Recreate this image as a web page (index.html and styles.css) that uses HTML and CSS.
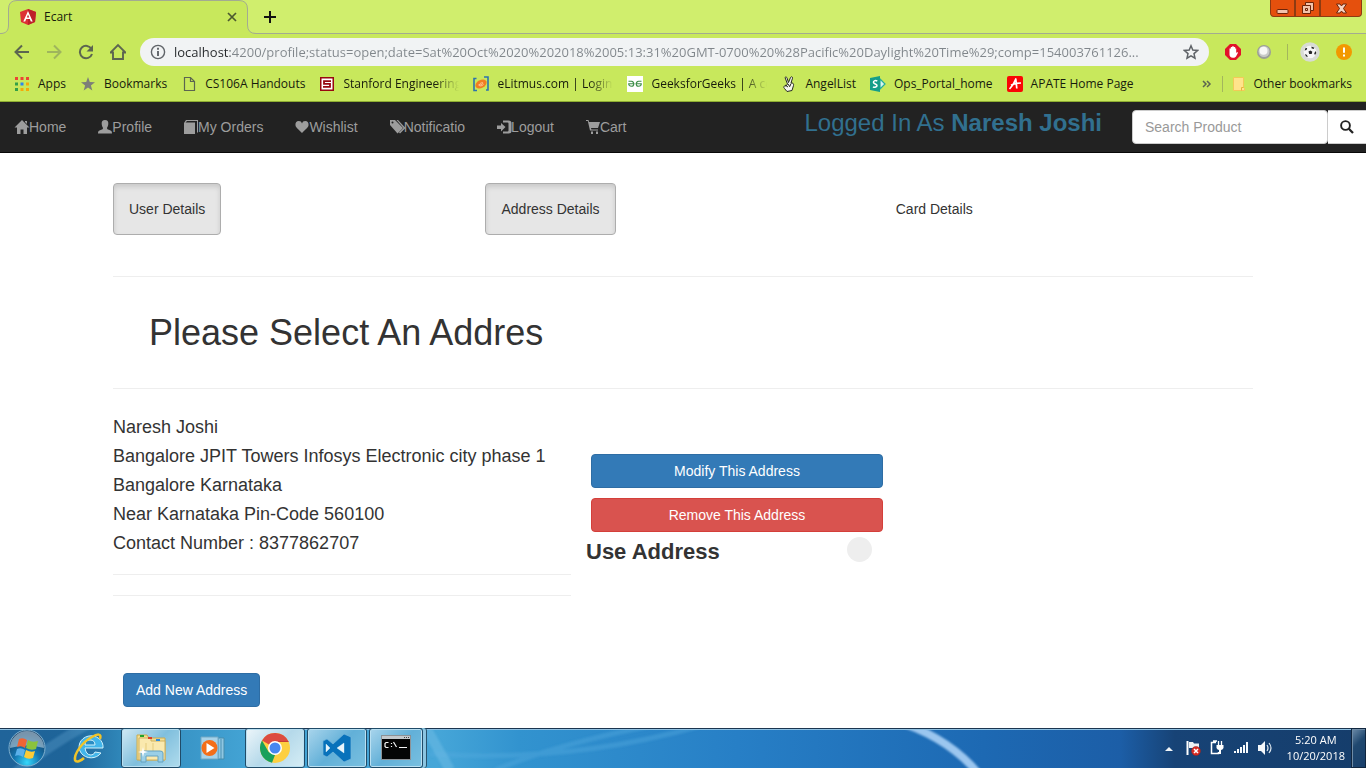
FILE: index.html
```html
<!DOCTYPE html>
<html lang="en">
<head>
<meta charset="utf-8">
<title>Ecart</title>
<link rel="stylesheet" href="styles.css">
</head>
<body>
<header class="browser">
  <div class="tab-strip">
    <div class="tab">
      <svg class="tab-shape" width="256" height="34" viewBox="0 0 256 34"><path d="M0 33.5C6 33.5 8.500 31 8.500 25V9Q8.500 .5 17 .5H239Q247.500 .5 247.500 9V25Q247.500 33.500 256 33.500V35H0Z" fill="#c8e85c"/><path d="M0 33.500C6 33.500 8.500 31 8.500 25V9Q8.500 .5 17 .5H239Q247.500 .5 247.500 9V25Q247.500 33.500 256 33.500" fill="none" stroke="#a3ab91"/></svg>
      <svg width="16" height="16" viewBox="0 0 16 16"><path d="M8 0l8 3-1 10-7 3-7-3L0 3z" fill="#dd3035"/><path d="M8 0l8 3-1 10-7 3z" fill="#bd2029"/><path d="M8 2L3.300 12.500h1.900l1-2.400h3.600l1 2.400h1.900zM8 5.600L9.200 8.500H6.800z" fill="#fff" fill-rule="evenodd"/></svg>
      <span class="tab-title">Ecart</span>
      <button class="bare" aria-label="Close tab"><svg width="10" height="10" viewBox="0 0 10 10"><path d="M1 1l8 8M9 1L1 9" stroke="#4c5930" stroke-width="1.700"/></svg></button>
    </div>
    <button class="bare new-tab" aria-label="New tab"><svg width="12" height="12" viewBox="0 0 12 12"><path d="M6 0v12M0 6h12" stroke="#111" stroke-width="2"/></svg></button>
    <div class="window-controls">
      <button class="minimise" aria-label="Minimize"><svg width="13" height="13" viewBox="0 0 13 13"><rect x="1" y="7.500" width="11" height="4" rx="1" fill="#f3c3ab" stroke="#6e2409"/></svg></button>
      <button class="restore" aria-label="Restore"><svg width="14" height="14" viewBox="0 0 14 14"><path d="M4.500 1.500h8v8h-3v3h-8v-8h3z" fill="#f3c3ab" stroke="#6e2409"/><path d="M4.500 4.500h5v5M4.500 7.500h2v2h-2z" fill="none" stroke="#6e2409"/></svg></button>
      <button class="close" aria-label="Close"><svg width="13" height="13" viewBox="0 0 13 13"><path d="M1.500 2h3.500l1.500 2L8 2h3.500L8.500 6.500l3 4.500H8L6.500 9 5 11H1.500l3-4.500z" fill="#f6d3c2" stroke="#6e2409"/></svg></button>
    </div>
  </div>

  <div class="toolbar">
    <div class="nav-buttons">
      <button class="bare" aria-label="Back"><svg width="16" height="16" viewBox="0 0 16 16"><path d="M15 8H2M8 1.500L1.500 8 8 14.500" fill="none" stroke="#5c6550" stroke-width="2"/></svg></button>
      <button class="bare" aria-label="Forward"><svg width="16" height="16" viewBox="0 0 16 16"><path d="M1 8h13M8 1.500L14.500 8 8 14.500" fill="none" stroke="#9fb55d" stroke-width="2"/></svg></button>
      <button class="bare" aria-label="Reload"><svg width="16" height="16" viewBox="0 0 16 16"><path d="M13.500 5A6.200 6.200 0 1 0 14 10" fill="none" stroke="#5c6550" stroke-width="2"/><path d="M15 1v6.500H8.500z" fill="#5c6550"/></svg></button>
      <button class="bare" aria-label="Home"><svg width="16" height="18" viewBox="1 0 16 18"><path d="M1.500 9.500L9 2l7.500 7.500H14V16H4V9.500z" fill="none" stroke="#5c6550" stroke-width="1.900"/></svg></button>
    </div>
    <div class="omnibox">
      <svg width="16" height="16" viewBox="0 0 16 16"><circle cx="8" cy="8" r="6.600" fill="none" stroke="#5f6368" stroke-width="1.400"/><path d="M8 3.800v1.900M8 7v5" stroke="#5f6368" stroke-width="1.900"/></svg>
      <input class="url" type="text" aria-label="Address" value="localhost:4200/profile;status=open;date=Sat%20Oct%2020%202018%2005:13:31%20GMT-0700%20%28Pacific%20Daylight%20Time%29;comp=154003761126...">
      <button class="bare" aria-label="Bookmark this page"><svg width="16" height="16" viewBox="0 0 16 16"><path d="M8 1.800l1.800 4.300 4.700.4-3.500 3.100 1 4.600L8 11.800l-4 2.400 1-4.600-3.500-3.100 4.700-.4z" fill="none" stroke="#5f6368" stroke-width="1.500"/></svg></button>
    </div>
    <div class="extensions">
      <button class="bare" aria-label="Ad blocker"><svg width="16" height="16" viewBox="0 0 16 16"><path d="M5 0h6l5 5v6l-5 5H5l-5-5V5z" fill="#e2122a"/><path d="M4.500 8V4.500h1.300V3h1.400V2.300h1.500V3h1.500v1.500h1V9l1-1 .8.800-2 3.700c-.6.900-1.500 1.200-3 1.200-2.500 0-3.500-1.500-3.500-3.200z" fill="#fff"/></svg></button>
      <button class="bare" aria-label="Extension"><svg width="14" height="14" viewBox="0 0 14 14"><circle cx="7" cy="7" r="7" fill="#9b9e98"/><circle cx="7" cy="6.500" r="5.500" fill="#c8cac9"/><circle cx="6.500" cy="5.800" r="4" fill="#f7f7f7"/></svg></button>
      <span class="divider"></span>
      <button class="bare" aria-label="Profile"><svg width="20" height="20" viewBox="0 0 20 20"><circle cx="10" cy="10" r="9.800" fill="#d8dbd5"/><circle cx="10" cy="10" r="6.300" fill="#f6f6f6"/><path d="M8.500 9.500l2-1 1.800 1.300-.6 2.200H9.200zM4.500 8.500l1.200-2.700 1.500.4L6.500 8zM11.500 4.500l3 1.200-1 1.300-2-.7zM15.500 9l.8 2-1.300 2-.8-1.500zM5 12l2 1 .8 2.200-2-1z" fill="#252525"/></svg></button>
      <button class="bare" aria-label="Menu, update available"><svg width="16" height="16" viewBox="0 0 16 16"><circle cx="8" cy="8" r="8" fill="#f29900"/><path d="M8 3.500v5.300M8 10.500v2" stroke="#fff" stroke-width="2"/></svg></button>
    </div>
  </div>

  <nav class="bookmarks" aria-label="Bookmarks">
    <a class="bookmark" href="#"><svg width="16" height="16" viewBox="0 0 16 16"><path d="M1 1h3v3H1zM6.500 1h3v3h-3zM12 1h3v3h-3z" fill="#ea4335"/><path d="M1 6.500h3v3H1zM1 12h3v3H1z" fill="#34a046"/><path d="M6.500 6.500h3v3h-3z" fill="#2b87f0"/><path d="M12 6.500h3v3h-3zM6.500 12h3v3h-3zM12 12h3v3h-3z" fill="#f6a908"/></svg><span>Apps</span></a>
    <a class="bookmark" href="#"><svg width="16" height="16" viewBox="0 0 16 16"><path d="M8 1l1.800 5 5.200.2-4.100 3.300 1.400 5L8 11.600l-4.300 2.900 1.400-5L1 6.200 6.200 6z" fill="#7c7f78"/></svg><span>Bookmarks</span></a>
    <a class="bookmark" href="#"><svg width="16" height="16" viewBox="0 0 16 16"><path d="M3.500 1.500h6l4 4v9h-10zM9.500 1.500v4h4" fill="none" stroke="#5c6550" stroke-width="1.200"/></svg><span>CS106A Handouts</span></a>
    <a class="bookmark" href="#"><svg width="16" height="16" viewBox="0 0 16 16"><path d="M1 1h14v14H1z" fill="#98080f"/><path d="M2.500 2.500h11v11h-11z" fill="#fff"/><path d="M12 5.200H5v2.600h6v3H4" fill="none" stroke="#98080f" stroke-width="1.800"/></svg><span class="clipped">Stanford Engineering</span></a>
    <a class="bookmark" href="#"><svg width="16" height="16" viewBox="0 0 16 16"><path d="M3.500 2.500H1v12h3M11 1h4v13h-2" fill="none" stroke="#2c73ad" stroke-width="1.600"/><ellipse cx="8" cy="8" rx="6" ry="4" fill="#f27c21" transform="rotate(-28 8 8)"/><path d="M5.500 9c3 0 4.500-1.200 4.500-2s-3.500 0-3.800 2c-.2 1.200 2.300 1.500 4.300-.5" fill="none" stroke="#ffd0a7" stroke-width=".8"/></svg><span class="clipped">eLitmus.com | Login P</span></a>
    <a class="bookmark" href="#"><svg width="16" height="16" viewBox="0 0 16 16"><path d="M0 0h16v16H0z" fill="#fff"/><path d="M1.500 5.200h3c3 .5 3 5 0 5-2 0-2.800-1.300-2.800-2.500H7.500M14.500 5.200h-3c-3 .5-3 5 0 5 2 0 2.800-1.300 2.800-2.500H8.500" fill="none" stroke="#3f8f49" stroke-width="1.100"/></svg><span class="clipped">GeeksforGeeks | A co</span></a>
    <a class="bookmark" href="#"><svg width="16" height="16" viewBox="0 0 16 16"><path d="M4 1.500c1-1 1.800-.3 2.100.7L7.500 6.500l2-5c.8-1.400 2.400-.6 2 .7L10 7c1.800-.3 3 .7 2.500 2.500l-1.500 5-5 1-2.500-3C2 11 3 9.500 5 10L6.500 8z" fill="#f5f5ed" stroke="#272b20"/><path d="M4 9l3 2M7 8l2 3M10 7.500l-1 2.500" stroke="#272b20"/></svg><span>AngelList</span></a>
    <a class="bookmark" href="#"><svg width="16" height="16" viewBox="0 0 16 16"><path d="M10 3l5 5-5 5z" fill="#d8f4ef" stroke="#25ae9a" stroke-width="1.200"/><path d="M0 2l10-2v16L0 14z" fill="#159e8a"/><path d="M7.300 5C5 4 3.200 5 3.500 6.500S7 8 7 9.500 4.500 11.800 3 10.800" fill="none" stroke="#fff" stroke-width="1.500"/></svg><span>Ops_Portal_home</span></a>
    <a class="bookmark" href="#"><svg width="16" height="16" viewBox="0 0 16 16"><rect width="16" height="16" rx="2" fill="#fb0505"/><path d="M2.500 13C5 10.500 7.500 6.500 8.800 3l1 9.500M4 9.200q4-2.200 10-2.200" fill="none" stroke="#fff" stroke-width="1.700" stroke-linejoin="round"/></svg><span>APATE Home Page</span></a>
    <div class="bookmarks-end">
      <button class="bare" aria-label="More bookmarks"><svg width="10" height="8" viewBox="0 0 10 8"><path d="M1 1l3 3-3 3M5 1l3 3-3 3" fill="none" stroke="#5c6550" stroke-width="1.500"/></svg></button>
      <span class="divider"></span>
      <a class="bookmark" href="#"><svg width="12" height="16" viewBox="2 0 12 16"><path d="M2.500 1.500h10v9.500l1 1.500v2h-11z" fill="#ffe38b" stroke="#f2ca57"/><path d="M10.500 14.500v-3h2" fill="none" stroke="#e6b23c"/></svg><span>Other bookmarks</span></a>
    </div>
  </nav>
</header>

<div class="navbar">
  <nav class="menu" aria-label="Main">
    <a href="#"><svg viewBox="0 0 14 14"><path d="M7 0l7.500 7.500H12V14H8.500V9.500h-3V14H2V7.500H-.5L7 0zM10 1h2v3l-2-2z"/></svg>Home</a>
    <a href="#"><svg viewBox="0 0 14 14"><path d="M7 0c2.500 0 3.500 1.500 3.300 4C10.200 6 9.300 7 9 8c0 1.500 1.500 1.500 3 2.200 1.500.6 2 1.300 2 3.300H0c0-2 .5-2.700 2-3.300C3.500 9.500 5 9.500 5 8c-.3-1-1.200-2-1.300-4C3.500 1.500 4.500 0 7 0z"/></svg>Profile</a>
    <a href="#"><svg viewBox="0 0 14 14"><path d="M0 3l2-3h12v12l-1 1V1H3L1.500 2.500H11V14H0z"/></svg>My Orders</a>
    <a href="#"><svg viewBox="0 0 14 14"><path d="M7 3.500C7.500 1.800 8.500 1 10.200 1 12.500 1 14 3 13.500 5.500 13 8 9.500 10 7 13 4.500 10 1 8 .5 5.500 0 3 1.500 1 3.800 1 5.500 1 6.500 1.800 7 3.500z"/></svg>Wishlist</a>
    <a href="#"><svg viewBox="0 0 14 14"><path d="M0 0h5l8 8-5.500 5.500L0 5zM2.500 1.500a1 1 0 1 0 0 2 1 1 0 0 0 0-2zM6.500 0H8l7.500 8-5.500 5.500L9 12.500 13.500 8z" fill-rule="evenodd"/></svg>Notificatio</a>
    <a href="#"><svg viewBox="0 0 14 14"><path d="M0 5.500h4V3l4.500 4L4 11.500V9H0zM6 .5h5.500Q14.500 .5 14.500 3v8q0 2.500-3 2.500H6v-2h4.500q1 0 1-1V3.500q0-1-1-1H6z"/></svg>Logout</a>
    <a href="#"><svg viewBox="0 0 14 14"><path d="M0 0h2.500L3 2h11l-2 6H5l.4 1.500H12v1H4L1.800 1H0zM5 11.500h2V14H5zM10 11.500h2V14h-2z"/></svg>Cart</a>
  </nav>
  <h3 class="logged-in">Logged In As <b>Naresh Joshi</b></h3>
  <form class="search">
    <input type="text" placeholder="Search Product" aria-label="Search Product">
    <button type="button" aria-label="Search"><svg width="14" height="14" viewBox="0 0 14 14"><circle cx="5.500" cy="5.500" r="4.400" fill="none" stroke="#222" stroke-width="1.900"/><path d="M8.800 8.800l4.200 4.200" stroke="#222" stroke-width="2.300"/></svg></button>
  </form>
</div>

<main class="page">
  <div class="container">
    <ul class="sections">
      <li><button class="section-button active">User Details</button></li>
      <li><button class="section-button active">Address Details</button></li>
      <li><button class="section-button">Card Details</button></li>
    </ul>
    <hr>
    <h1>Please Select An Addres</h1>
    <hr>
    <div class="address-row">
      <section class="address">
        <p>Naresh Joshi<br>Bangalore JPIT Towers Infosys Electronic city phase 1<br>Bangalore Karnataka<br>Near Karnataka Pin-Code 560100<br>Contact Number : 8377862707</p>
        <hr>
        <hr>
      </section>
      <section class="address-actions">
        <button class="btn primary">Modify This Address</button>
        <button class="btn danger">Remove This Address</button>
        <label class="use-address" for="use-address">Use Address <input type="radio" id="use-address" name="address"></label>
      </section>
    </div>
    <button class="btn primary add-address">Add New Address</button>
  </div>
</main>

<footer class="taskbar">
  <svg class="glow" viewBox="0 0 1366 40" preserveAspectRatio="none">
    <defs>
      <linearGradient id="bar"><stop offset="0" stop-color="#20649a"/><stop offset=".05" stop-color="#1e6499"/><stop offset=".09" stop-color="#3088ba"/><stop offset=".18" stop-color="#43a3d4"/><stop offset=".32" stop-color="#46a6d8"/><stop offset=".38" stop-color="#3293cf"/><stop offset=".54" stop-color="#277fc6"/><stop offset=".72" stop-color="#1d69b3"/><stop offset=".82" stop-color="#1c5ea7"/><stop offset=".86" stop-color="#174376"/><stop offset="1" stop-color="#153d6b"/></linearGradient>
      <filter id="soft" x="-20%" y="-20%" width="140%" height="140%"><feGaussianBlur stdDeviation="1.300"/></filter>
    </defs>
    <path d="M0 0h1366v40H0z" fill="url(#bar)"/>
    <g fill="none" filter="url(#soft)"><path d="M905-4Q950 12 978 45" stroke="#9bc6ef" stroke-width="8"/><path d="M495 42Q560 15 655-3M430 26Q570 35 700-2" stroke="#55a9df" stroke-width="5" opacity=".4"/><path d="M15 45Q45 20 90-5" stroke="#6db1dc" stroke-width="10" opacity=".3"/><path d="M425-2L450 42" stroke="#7bc4e9" stroke-width="10" opacity=".4"/></g>
    <path d="M0 .5h1366" stroke="#1b3550"/><path d="M0 1.500h1366" stroke="#8fc1e2"/>
  </svg>
  <button class="bare start" aria-label="Start"><svg width="40" height="40" viewBox="0 0 40 40"><defs><radialGradient id="orb" cx=".5" cy=".9" r=".8"><stop offset="0" stop-color="#35d8fb"/><stop offset=".45" stop-color="#1477b1"/><stop offset="1" stop-color="#173f66"/></radialGradient></defs><circle cx="20" cy="20" r="18" fill="url(#orb)" stroke="#81b2d0"/><path d="M3 20a17 17 0 0 1 34 0q-17-5-34 0z" fill="#d8eaf2" opacity=".5"/><path d="M12 11q4-2 8 1l-2 8q-4-3-8-1z" fill="#ef6535"/><path d="M21 12q4 3 10 1l-2 8q-5 2-10-1z" fill="#8bc33d"/><path d="M10 21q4-2 8 1l-2 7q-4-3-8-1z" fill="#5bb0ea"/><path d="M19 22q5 3 9 1l-2 7q-5 2-9-1z" fill="#fccb36"/></svg></button>
  <button class="task plain ie" aria-label="Internet Explorer"><svg width="34" height="34" viewBox="0 0 34 34"><path d="M29 22a12 11 0 1 1 2-5H13q1 7 6 7 3 0 4-3z" fill="#42b5ea" stroke="#d1f2fb"/><path d="M13 14h10q0-5-5-5t-5 5z" fill="#2b8dc4" stroke="#d1f2fb"/><path d="M28 8c2-6-3-5-8-2C10 11 2 23 3 29c1 3 6 1 9-2" fill="none" stroke="#f1c429" stroke-width="2.500"/></svg></button>
  <button class="task lit" aria-label="Windows Explorer"><svg width="34" height="30" viewBox="0 0 34 30"><path d="M3 2h10l2 3h16v22H3z" fill="#f4de91" stroke="#c9aa51"/><path d="M5 5h12v3h14v19H5z" fill="#fae9ae" stroke="#cfb15f"/><path d="M6 2h4v2H6z" fill="#23a329"/><path d="M14 4h4v2h-4z" fill="#dc3f29"/><path d="M22 6h4v2h-4z" fill="#2c8cdf"/><path d="M12 10v10M19 10v10" stroke="#e5cb7d"/><path d="M7 29V20q0-2 2-2h17q3 0 3 2v9h-5v-6H12v6z" fill="#9acfe7" stroke="#64a2c1"/><path d="M9 14l1 4 4 1-4 1-1 4-1-4-4-1 4-1z" fill="#fff"/></svg></button>
  <button class="task plain player" aria-label="Media Player"><svg width="28" height="26" viewBox="0 0 28 26"><path d="M3 3h22v21H5z" fill="#8fc7e2" stroke="#478dad"/><path d="M19 3v21M22 4v20" stroke="#4b91b4"/><path d="M2 2h17v22H2z" fill="#a7d2e8" stroke="#72a9c5"/><circle cx="10.500" cy="13" r="8" fill="#f46e18"/><path d="M7.500 8l8 5-8 5z" fill="#fff"/></svg></button>
  <button class="task current" aria-label="Google Chrome"><svg width="30" height="30" viewBox="0 0 30 30"><circle cx="15" cy="15" r="15" fill="#fdcf41"/><path d="M15 15L2 7.500A15 15 0 0 1 28.500 8.500H15z" fill="#dc4b40"/><path d="M2 7.500L8.700 19 15 22l-3 7.700A15 15 0 0 1 2 7.500z" fill="#18a05c"/><path d="M15 8.500h13.500" stroke="#c63f35"/><circle cx="15" cy="15" r="7" fill="#fff"/><circle cx="15" cy="15" r="5.500" fill="#4787f1"/></svg></button>
  <button class="task" aria-label="Visual Studio Code"><svg width="30" height="30" viewBox="0 0 30 30"><path d="M22 1l7 3v22l-7 3-11-10-6 5-4-2V8l4-2 6 5zM4 11v8l4-4zM22 10l-7 5 7 5z" fill="#0872bb" stroke="#75b7dc" stroke-width=".7" fill-rule="evenodd"/><path d="M4 11v8l4-4zM22 10l-7 5 7 5z" fill="#e8f5fc"/></svg></button>
  <button class="task stacked" aria-label="Command Prompt"><svg width="30" height="26" viewBox="0 0 30 26"><path d="M.5.5h29v24H.5z" fill="#050505" stroke="#8d9296"/><path d="M1 1h28v3H1z" fill="#c3c9cd"/><path d="M23 2.500h1M25 2.500h1M27 2.500h1" stroke="#444"/><path d="M7.500 7.500H5l-1 1v3l1 1h2.500M10.500 8v1M10.500 11v1M12.500 7l3 5M18 12.500h8" fill="none" stroke="#f5f5f5" stroke-width="1.200"/></svg></button>
  <div class="tray">
    <svg width="8" height="5" viewBox="0 0 8 5"><path d="M0 5l4-4 4 4z" fill="#f1f5f8"/></svg>
    <svg width="16" height="16" viewBox="0 0 16 16"><path d="M2.500 1v14" stroke="#fff" stroke-width="2"/><path d="M4 2h4l1 1.500h5v6H9L8 8H4z" fill="#edf2f5"/><circle cx="11" cy="11" r="4.500" fill="#d92c23" stroke="#8b2724" stroke-width=".5"/><path d="M9 9l4 4M13 9l-4 4" stroke="#fff" stroke-width="1.500"/></svg>
    <svg width="16" height="16" viewBox="0 0 16 16"><path d="M7 2.500H2.500v11h7V12M4 1h4" fill="none" stroke="#fff" stroke-width="1.500"/><path d="M9.500 1v4M12.500 1v4" stroke="#fff" stroke-width="1.300"/><path d="M7.500 5h7v3q-1 2-2.500 2v4h-2v-4q-1.500 0-2.500-2z" fill="#fff"/></svg>
    <svg width="16" height="16" viewBox="0 0 16 16"><path d="M1 11h2v2H1zM4 9h2v4H4zM7 7h2v6H7zM10 5h2v8h-2zM13 2h2v11h-2z" fill="#f7fafc"/></svg>
    <svg width="16" height="16" viewBox="0 0 16 16"><path d="M1 5h3l4-4v14l-4-4H1z" fill="#f4f7fa"/><path d="M10 5q2 3 0 6M12 3q4 5 0 10" fill="none" stroke="#dfe8ef" stroke-width="1.200"/></svg>
    <time class="clock" datetime="2018-10-20T05:20">5:20 AM<br>10/20/2018</time>
  </div>
  <button class="show-desktop" aria-label="Show desktop"></button>
</footer>
</body>
</html>
```

FILE: styles.css
```css
* {
  box-sizing: border-box;
}

body {
  margin: 0;
  min-height: 100vh;
  display: flex;
  flex-direction: column;
  overflow-x: hidden;
  background: #fff;
  color: #333;
  font: 14px/20px "Liberation Sans", Arial, sans-serif;
}

button,
input {
  font: inherit;
}

svg {
  display: block;
  flex: none;
}

a {
  color: inherit;
  text-decoration: none;
}

.bare {
  padding: 0;
  border: 0;
  background: none;
}

/* Browser window */

.browser {
  background: #c8e85c;
  border-bottom: 1px solid #8fae32;
  color: #171b0c;
  font: 12px/16px "Open Sans", "Noto Sans", sans-serif;
}

.tab-strip {
  height: 34px;
  display: flex;
  align-items: center;
  background: #d0ee6d;
  box-shadow: inset 0 -1px #a3ab91;
}

.tab {
  position: relative;
  width: 256px;
  height: 34px;
  padding: 0 19px 0 20px;
  display: flex;
  align-items: center;
  gap: 8px;
}

.tab > * {
  position: relative;
}

.tab .tab-shape {
  position: absolute;
  inset: 0;
}

.tab-title {
  flex: 1;
}

.new-tab {
  margin-left: 8px;
}

.window-controls {
  align-self: flex-start;
  display: flex;
  margin-left: auto;
  padding-right: 4px;
}

.window-controls button {
  height: 17px;
  width: 25px;
  padding: 0;
  display: grid;
  place-items: center;
  border: 1px solid #8d3b12;
  border-top: 0;
  background: #e5500d;
}

.window-controls .minimise {
  border-bottom-left-radius: 4px;
}

.window-controls .close {
  width: 42px;
  border-bottom-right-radius: 4px;
}

.toolbar {
  height: 36px;
  padding: 0 14px;
  display: flex;
  align-items: center;
}

.nav-buttons {
  width: 126px;
  display: flex;
  align-items: center;
  gap: 16px;
}

.omnibox {
  flex: 1;
  min-width: 0;
  height: 28px;
  padding: 0 10px;
  display: flex;
  align-items: center;
  gap: 8px;
  border-radius: 14px;
  background: #f1f3f4;
}

.url {
  flex: 1;
  min-width: 0;
  padding: 0;
  border: 0;
  font-size: 13px;
  line-height: 20px;
  color: transparent;
  background: linear-gradient(to right, #25282b 56px, #80868b 56px);
  -webkit-background-clip: text;
  background-clip: text;
}

.extensions {
  display: flex;
  align-items: center;
  gap: 16px;
  padding-left: 16px;
}

.extensions .divider {
  margin-right: -4px;
}

.divider {
  width: 1px;
  height: 16px;
  background: #a3b65d;
}

.bookmarks {
  height: 31px;
  padding: 0 14px 4px;
  display: flex;
  align-items: center;
  gap: 14px;
}

.bookmark {
  display: flex;
  align-items: center;
  gap: 8px;
  white-space: nowrap;
}

.clipped {
  width: 116px;
  overflow: hidden;
  -webkit-mask-image: linear-gradient(to right, #000 92px, transparent);
  mask-image: linear-gradient(to right, #000 92px, transparent);
}

.bookmarks-end {
  margin-left: auto;
  display: flex;
  align-items: center;
  gap: 10px;
}

/* Site navigation */

.navbar {
  display: flex;
  align-items: flex-start;
  height: 51px;
  background: #222;
  border-bottom: 1px solid #080808;
}

.menu {
  display: flex;
  gap: 32px;
  padding: 15px;
  color: #9d9d9d;
}

.menu a {
  display: flex;
  align-items: center;
}

.menu svg {
  width: 14px;
  height: 14px;
  fill: currentColor;
  overflow: visible;
}

.logged-in {
  margin: 8px 30px 0 auto;
  color: #31708f;
  font-size: 24px;
  font-weight: 400;
  line-height: 26px;
}

.search {
  display: flex;
  width: 234px;
  margin-top: 8px;
}

.search input {
  flex: 1;
  min-width: 0;
  height: 34px;
  padding: 6px 12px;
  border: 1px solid #ccc;
  border-radius: 4px;
}

.search input::placeholder {
  color: #999;
}

.search button {
  width: 38px;
  height: 34px;
  padding: 0 12px;
  border: 1px solid #ccc;
  border-width: 1px 0;
  background: #fff;
}

/* Profile page */

.page {
  flex: 1;
  padding: 30px 0 20px;
}

.container {
  width: 100%;
  max-width: 1140px;
  margin: 0 auto;
}

.container hr {
  margin: 20px 0;
  border: 0;
  border-top: 1px solid #eee;
}

.sections {
  display: flex;
  margin: 0 0 41px;
  padding: 0;
  list-style: none;
}

.sections li {
  flex: 1 1 auto;
}

.section-button {
  padding: 15px;
  border: 1px solid transparent;
  border-radius: 4px;
  background: none;
  color: #333;
  line-height: 20px;
}

.section-button.active {
  border-color: #adadad;
  background: #e6e6e6;
  box-shadow: inset 0 3px 5px rgba(0, 0, 0, .125);
}

h1 {
  margin: 36px 36px 35px;
  font-size: 36px;
  font-weight: 400;
  line-height: 40px;
}

.address-row {
  display: flex;
  flex-wrap: wrap;
  gap: 15px;
}

.address {
  flex: 0 1 458px;
}

.address p {
  margin: 4px 0 0;
  font-size: 18px;
  line-height: 29px;
}

.address p + hr {
  margin-top: 16px;
}

.address hr + hr {
  margin-bottom: 0;
}

.address-actions {
  flex: 0 1 302px;
  display: flex;
  flex-direction: column;
  gap: 10px;
  padding-top: 45px;
}

.address-actions .btn {
  margin: 0 5px;
}

.btn {
  padding: 6px 12px;
  border: 1px solid;
  border-radius: 4px;
  color: #fff;
  line-height: 20px;
}

.primary {
  border-color: #2e6da4;
  background: #337ab7;
}

.danger {
  border-color: #d43f3a;
  background: #d9534f;
}

.use-address {
  display: flex;
  justify-content: space-between;
  margin-top: -5px;
  padding-right: 16px;
  font-size: 22px;
  font-weight: 700;
  line-height: 30px;
}

.use-address input {
  appearance: none;
  width: 25px;
  height: 25px;
  margin: 0;
  border-radius: 50%;
  background: #eee;
}

.add-address {
  margin: 77px 10px 0;
}

/* Taskbar */

.taskbar {
  position: relative;
  height: 40px;
  display: flex;
  align-items: stretch;
  color: #fff;
  font: 11px/16px "Open Sans", "Noto Sans", sans-serif;
}

.taskbar > * {
  position: relative;
}

.taskbar .glow {
  position: absolute;
  inset: 0;
  width: 100%;
  height: 100%;
}

.start {
  margin-left: 7px;
}

.task {
  width: 60px;
  margin-right: 2px;
  padding: 0;
  display: grid;
  place-items: center;
  border: 1px solid #204b68;
  border-radius: 3px;
  background: linear-gradient(135deg, #a9d5ec, #62b0d8 50%, #79c0e0);
  box-shadow: inset 0 0 0 1px #b9e0f2;
}

.task.plain {
  border-color: transparent;
  background: none;
  box-shadow: none;
}

.task.ie {
  margin-left: 12px;
}

.task.lit {
  background: linear-gradient(135deg, #d0e8f3, #80bfdd 50%, #b0dced);
}

.task.current {
  background: linear-gradient(135deg, #edf6fa, #b5d9ea 50%, #d5edf5);
}

.task.stacked {
  width: 54px;
  box-shadow: inset 0 0 0 1px #b9e0f2, 3px 0 #8bc5e1, 4px 0 #28546f;
}

.tray {
  margin-left: auto;
  display: flex;
  align-items: center;
  gap: 8px;
}

.tray svg:first-child {
  margin-right: 4px;
}

.clock {
  padding: 0 6px;
  text-align: center;
}

.show-desktop {
  width: 15px;
  padding: 0;
  border: 1px solid #10263f;
  background: linear-gradient(135deg, #6d8ca9, #20486f 40%, #183f6b);
  box-shadow: inset 1px 1px #6f8ba5;
}
```
